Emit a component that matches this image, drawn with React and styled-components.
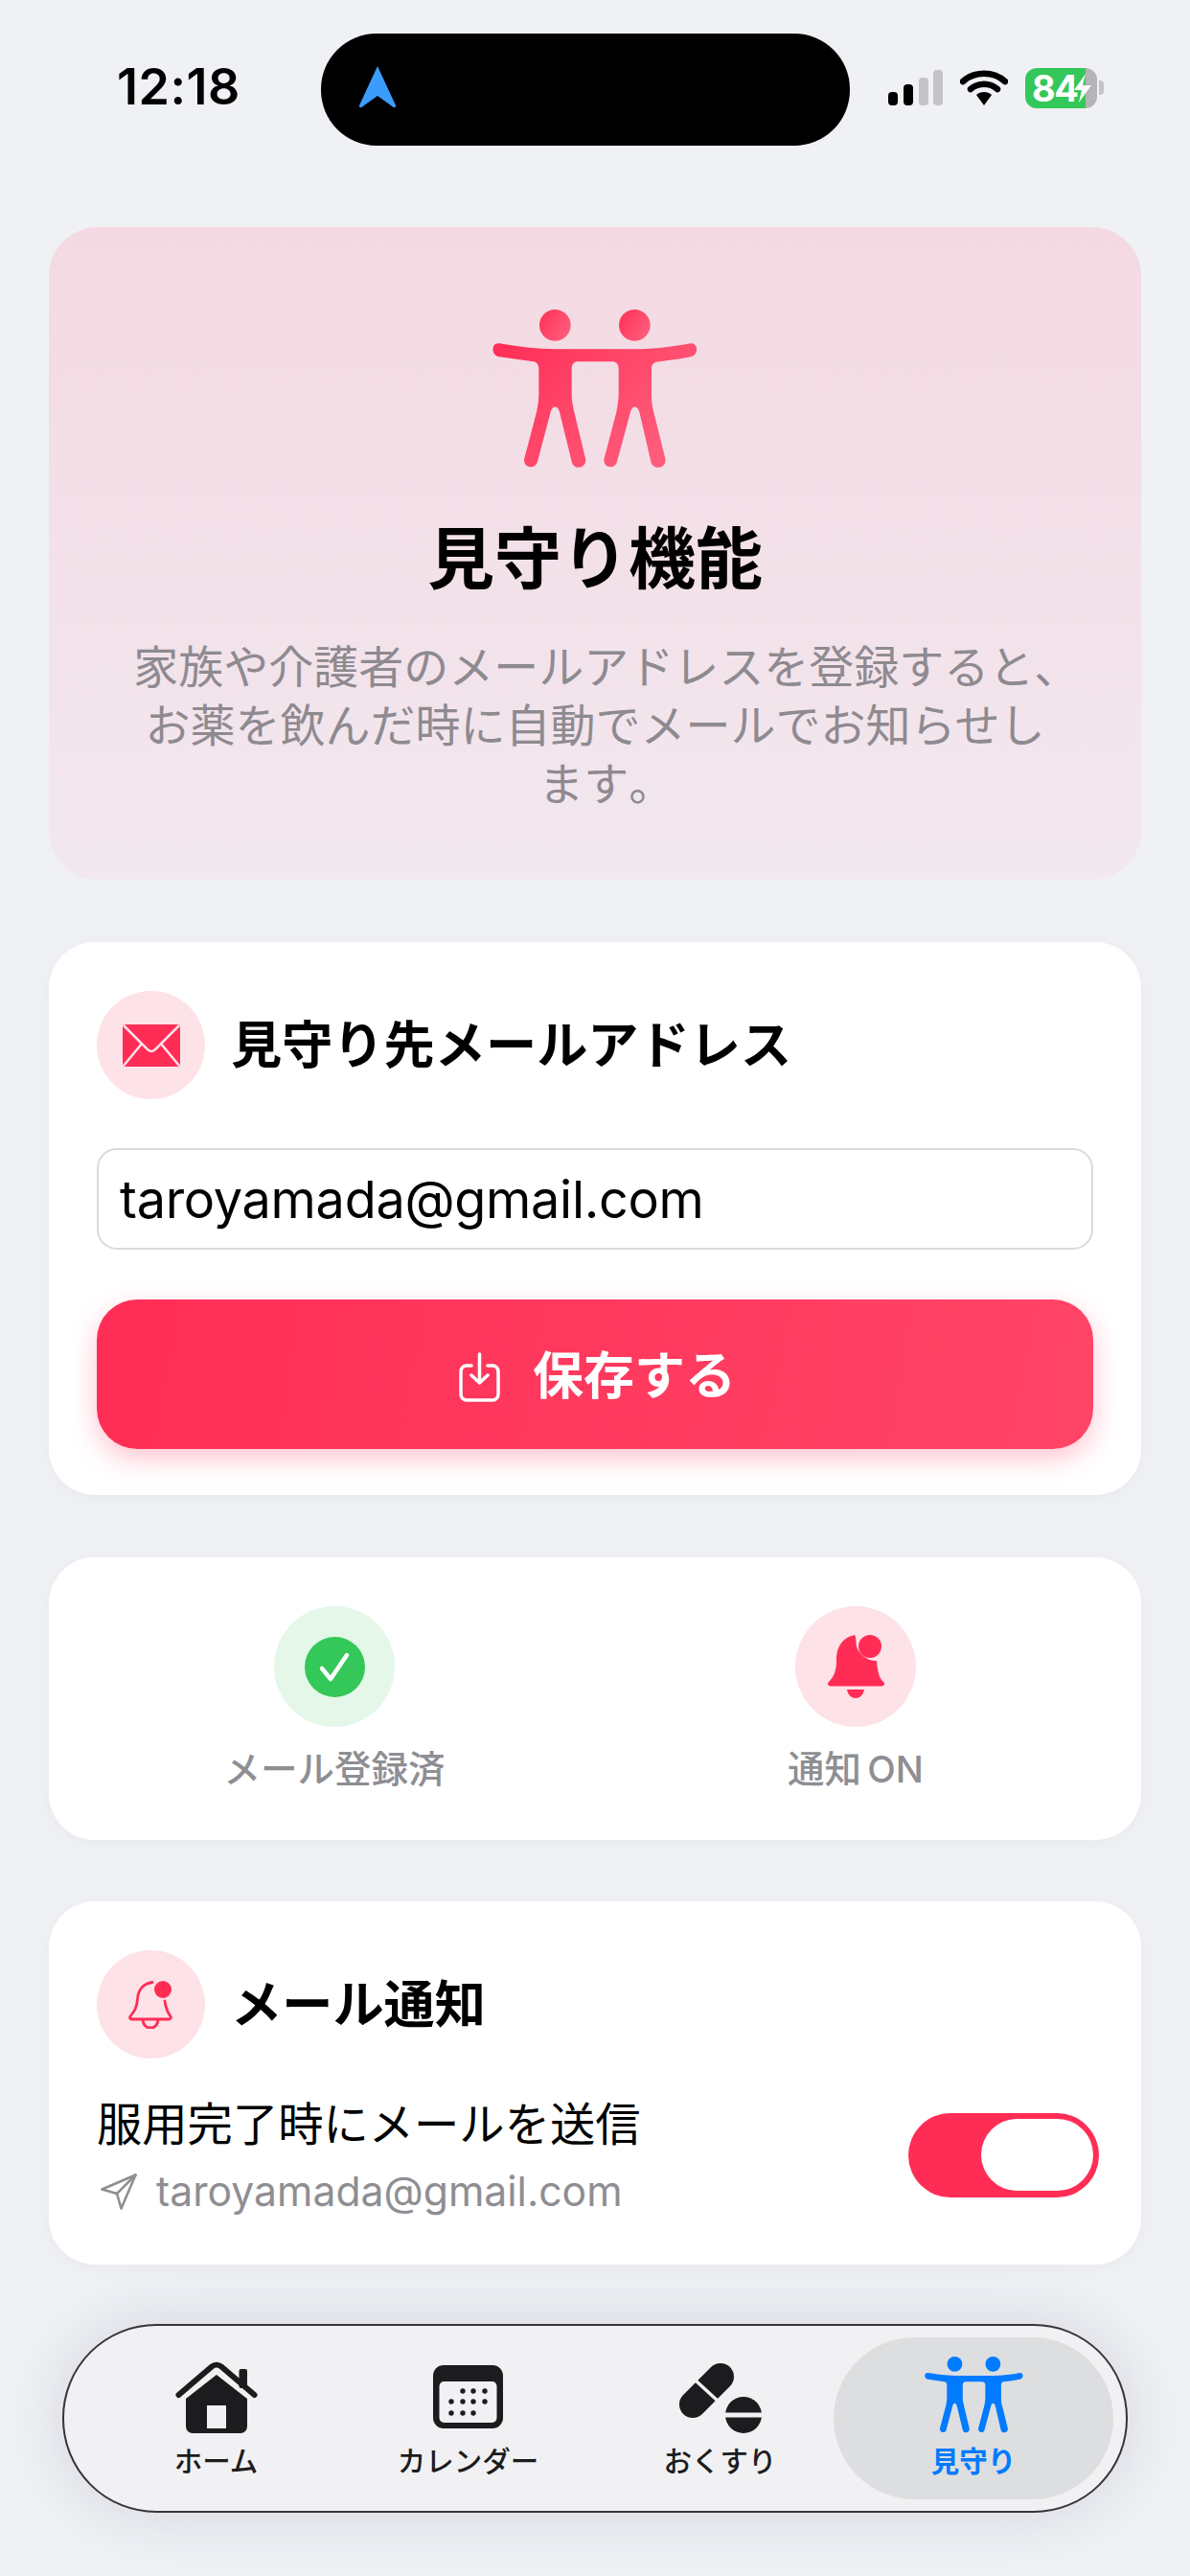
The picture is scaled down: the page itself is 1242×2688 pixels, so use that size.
import React from "react";
import styled, { createGlobalStyle } from "styled-components";

const Global = createGlobalStyle`
  html, body { margin: 0; padding: 0; background: #f0f1f5; }
  body { font-family: Inter, "Noto Sans CJK JP", sans-serif; }
  * { box-sizing: border-box; }
`;

const Page = styled.div`
  width: 1242px;
  height: 2688px;
  overflow: hidden;
  display: flex;
  flex-direction: column;
  background: #f0f1f5;
  padding: 0 51px;
`;

const StatusBar = styled.div`
  height: 237px;
  margin: 0 -51px;
  padding: 35px 90px 0 122px;
  display: flex;
  align-items: flex-start;
`;
const Time = styled.div`
  width: 213px;
  height: 117px;
  line-height: 112px;
  font-size: 52px;
  font-weight: 600;
  color: #000;
  letter-spacing: 0.5px;
`;
const Island = styled.div`
  width: 552px;
  height: 117px;
  border-radius: 58px;
  background: #000;
  display: flex;
  align-items: center;
  padding: 0 0 5px 39px;
`;
const StatusIcons = styled.div`
  margin-left: 40px;
  height: 117px;
  padding-bottom: 4px;
  display: flex;
  align-items: center;
  gap: 18px;
`;
const Battery = styled.div`
  position: relative;
  width: 75px;
  height: 42px;
  border-radius: 12px;
  background: linear-gradient(90deg, #34c759 84%, #b4b4b8 84%);
  color: #fff;
  font-size: 38px;
  font-weight: 700;
  line-height: 42px;
  padding-left: 7px;
  letter-spacing: -1.5px;
  &::after {
    content: "";
    position: absolute;
    right: -7px;
    top: 13px;
    width: 5px;
    height: 15px;
    border-radius: 0 4px 4px 0;
    background: #c4c4c8;
  }
`;
const Bolt = styled.svg`
  position: absolute;
  left: 50px;
  top: 6px;
`;

const Hero = styled.section`
  height: 681px;
  border-radius: 51px;
  background: linear-gradient(180deg, #f4d9e2 0%, #f2e8ef 100%);
  display: flex;
  flex-direction: column;
  align-items: center;
  padding-top: 86px;
`;
const HeroTitle = styled.h1`
  margin: 53px 0 0;
  font-size: 70px;
  line-height: 84px;
  font-weight: 700;
  color: #000;
`;
const HeroText = styled.p`
  margin: 39px 0 0;
  font-size: 47px;
  line-height: 61px;
  font-weight: 400;
  color: #8e8a90;
  text-align: center;
  white-space: nowrap;
`;
const HalfPunct = styled.span`
  font-feature-settings: "halt";
`;

const Card = styled.section`
  margin-top: ${(p) => p.$gap || 65}px;
  background: #fff;
  border-radius: 48px;
  box-shadow: 0 4px 20px rgba(0, 0, 0, 0.035);
  padding: 51px 50px ${(p) => p.$pb || 48}px;
`;
const CardHeader = styled.div`
  display: flex;
  align-items: center;
  gap: 27px;
`;
const CircleIcon = styled.div`
  width: ${(p) => p.$size || 113}px;
  height: ${(p) => p.$size || 113}px;
  border-radius: 50%;
  background: ${(p) => p.$bg || "#fde2e8"};
  display: flex;
  align-items: center;
  justify-content: center;
  flex: none;
`;
const CardTitle = styled.h2`
  margin: 0;
  font-size: 53.2px;
  line-height: 64px;
  font-weight: 700;
  color: #000;
`;
const EmailField = styled.div`
  margin-top: 51px;
  height: 106px;
  border: 2px solid #d8dadd;
  border-radius: 21px;
  padding: 0 22px;
  display: flex;
  align-items: center;
  font-size: 54px;
  color: #000;
  letter-spacing: -0.3px;
`;
const SaveButton = styled.button`
  margin-top: 52px;
  width: 100%;
  height: 156px;
  border: 0;
  border-radius: 42px;
  background: linear-gradient(100deg, #ff2d55 0%, #ff4567 100%);
  box-shadow: 0 10px 28px rgba(255, 45, 85, 0.28);
  display: flex;
  align-items: center;
  justify-content: center;
  gap: 34px;
  padding: 0 0 0 5px;
  font-family: inherit;
  font-size: 53px;
  font-weight: 600;
  color: #fff;
`;
const SaveLabel = styled.span`
  margin-bottom: 5px;
`;
const SaveGlyph = styled.svg`
  margin-top: 6px;
`;

const StatusGrid = styled.div`
  display: grid;
  grid-template-columns: 1fr 1fr;
  margin: 0 -24px;
`;
const StatusItem = styled.div`
  display: flex;
  flex-direction: column;
  align-items: center;
  gap: 20px;
`;
const StatusLabel = styled.div`
  font-size: 38.5px;
  line-height: 48px;
  font-weight: 500;
  color: #8e8e93;
  word-spacing: -4px;
`;

const ToggleRow = styled.div`
  margin: 39px -6px 0 0;
  display: flex;
  align-items: center;
  justify-content: space-between;
`;
const ToggleText = styled.div`
  display: flex;
  flex-direction: column;
  gap: 12px;
`;
const ToggleLabel = styled.div`
  font-size: 47.3px;
  line-height: 60px;
  color: #000;
`;
const ToggleSub = styled.div`
  display: flex;
  align-items: center;
  gap: 20px;
  padding-left: 4px;
  font-size: 42.7px;
  line-height: 56px;
  color: #8e8e93;
`;
const Toggle = styled.div`
  width: 199px;
  height: 88px;
  margin-bottom: 5px;
  border-radius: 44px;
  background: #ff2d55;
  display: flex;
  align-items: center;
  justify-content: flex-end;
  padding-right: 6px;
`;
const Thumb = styled.div`
  width: 117px;
  height: 75px;
  border-radius: 38px;
  background: #fff;
`;

const Nav = styled.nav`
  margin: 62px 14px 0;
  height: 197px;
  border-radius: 98px;
  border: 2px solid #36363a;
  background: #f1f1f3;
  box-shadow: 0 0 70px rgba(40, 40, 70, 0.13);
  display: flex;
  align-items: center;
  padding-left: 27px;
`;
const Tab = styled.div`
  flex: none;
  width: ${(p) => (p.$active ? 292 : 263)}px;
  height: 169px;
  margin-left: ${(p) => (p.$active ? -13 : 0)}px;
  border-radius: 85px;
  background: ${(p) => (p.$active ? "#dcdedf" : "transparent")};
  color: ${(p) => (p.$active ? "#007aff" : "#1c1c1e")};
  display: flex;
  flex-direction: column;
  align-items: center;
`;
const TabIcon = styled.div`
  height: 100px;
  display: flex;
  align-items: flex-end;
  padding-bottom: ${(p) => p.$pb || 0}px;
`;
const TabLabel = styled.div`
  margin-top: 11px;
  font-size: 29.5px;
  line-height: 36px;
  font-weight: ${(p) => (p.$active ? 700 : 500)};
`;

const FAMILY_PATH =
  "M243 205C300 215 360 222 418 223L667 223C730 223 790 215 843 205C865 203 870 240 843 247C810 255 770 258 735 263C725 266 720 272 720 285L720 370C721 395 722 400 728 425L763 565C770 595 725 605 718 575L682 420C675 398 660 398 654 420L612 575C604 603 565 593 572 565L610 420C615 395 617 380 617 360L617 285C617 270 610 262 595 262L490 262C478 262 470 270 470 285L470 360C470 385 473 395 478 420L513 565C520 595 477 605 470 575L432 420C426 398 410 398 404 420L363 575C355 603 315 593 322 565L360 420C365 395 367 380 367 360L367 285C367 270 360 264 350 262L243 247C217 242 217 203 243 205Z";

const Family = ({ width, fill, gradient }) => (
  <svg width={width} height={width * (0.776)} viewBox="222 99 642 498">
    {gradient && (
      <defs>
        <linearGradient id="heroGrad" x1="0" y1="0" x2="1" y2="0.6">
          <stop offset="0" stopColor="#ff2d55" />
          <stop offset="1" stopColor="#ff5d7c" />
        </linearGradient>
      </defs>
    )}
    <g fill={gradient ? "url(#heroGrad)" : fill}>
      <circle cx="418" cy="148" r="49" />
      <circle cx="667" cy="148" r="49" />
      <path d={FAMILY_PATH} />
    </g>
  </svg>
);

const LocationArrow = () => (
  <svg width="40" height="44" viewBox="0 0 40 44">
    <path d="M20 0L39 41C39.5 43 37.5 44 36 42.500L20 31L4 42.500C2.500 44 .5 43 1 41Z" fill="#3a9dfd" />
  </svg>
);
const Signal = () => (
  <svg width="57" height="37" viewBox="0 0 57 37">
    <rect x="0" y="23" width="10" height="14" rx="4" fill="#000" />
    <rect x="16" y="15" width="10" height="22" rx="4" fill="#000" />
    <rect x="32" y="8" width="10" height="29" rx="4" fill="#c4c4c8" />
    <rect x="47" y="0" width="10" height="37" rx="4" fill="#c4c4c8" />
  </svg>
);
const Wifi = () => (
  <svg width="50" height="37" viewBox="0 0 50 37">
    <path d="M3 12C15 1 35 1 47 12" fill="none" stroke="#000" strokeWidth="6.500" strokeLinecap="round" />
    <path d="M11 20C19 13 31 13 39 20" fill="none" stroke="#000" strokeWidth="6.500" strokeLinecap="round" />
    <path d="M17 26C21 22 29 22 33 26L25 37Z" fill="#000" />
  </svg>
);
const Mail = () => (
  <svg width="60" height="44" viewBox="0 0 60 44">
    <rect x="0" y="0" width="60" height="44" rx="3" fill="#ff2d55" />
    <path d="M1 1L26 26C28 28.500 32 28.500 34 26L59 1M1 43L20 20M59 43L40 20" fill="none" stroke="#fde2e8" strokeWidth="2.500" />
  </svg>
);
const SaveIcon = () => (
  <SaveGlyph width="43" height="52" viewBox="0 0 43 52" fill="none" stroke="#fff" strokeWidth="3.500" strokeLinecap="round" strokeLinejoin="round">
    <path d="M13 14H8a6 6 0 0 0-6 6V44a6 6 0 0 0 6 6H35a6 6 0 0 0 6-6V20a6 6 0 0 0-6-6H30" />
    <path d="M21.500 2V32M13 24L21.500 32L30 24" />
  </SaveGlyph>
);
const Check = () => (
  <svg width="63" height="63" viewBox="0 0 63 63">
    <circle cx="31.500" cy="31.500" r="31.500" fill="#34c759" />
    <path d="M18 33L27 44L44 19" fill="none" stroke="#fff" strokeWidth="4.500" strokeLinecap="round" strokeLinejoin="round" />
  </svg>
);
const BellSolid = () => (
  <svg width="59" height="66" viewBox="0 0 59 66">
    <path d="M28 0C14 3 9 14 9 26C9 38 6 44 1 49C-1 51 0 53.500 3 53.500H56C59 53.500 60 51 58 49C54 45 52 40 51 27C44 28 33 22 30 12C29 7 30 3 28 0Z" fill="#ff2d55" />
    <circle cx="44" cy="12" r="12" fill="#ff2d55" />
    <path d="M20 57H38C37 63 33 66 29 66C25 66 21 63 20 57Z" fill="#ff2d55" />
  </svg>
);
const BellOutline = () => (
  <svg width="48" height="50" viewBox="0 0 48 50" fill="none">
    <path d="M25 1.500C15 3 10 10 9.500 19C9 28 6 32 2 37C1 38.500 2 40 3.500 40H42C44 40 45 38.500 44 37C40 32 39 28 38 21" stroke="#ff2d55" strokeWidth="2.800" strokeLinecap="round" />
    <path d="M15 40C15 46 19 49 23 49C27 49 31 46 31 40" stroke="#ff2d55" strokeWidth="2.800" />
    <circle cx="36" cy="9" r="9" fill="#ff2d55" />
  </svg>
);
const SendIcon = () => (
  <svg width="38" height="38" viewBox="0 0 38 38" fill="none" stroke="#8e8e93" strokeWidth="2.600" strokeLinejoin="round" strokeLinecap="round">
    <path d="M1.500 16.500L36.500 1.500L21.500 36.500L17 21Z" />
    <path d="M17 21L36.500 1.500" />
  </svg>
);
const HomeIcon = () => (
  <svg width="86" height="75" viewBox="0 0 86 75">
    <rect x="66.500" y="8" width="8.500" height="20" rx="2" fill="#1c1c1e" />
    <path d="M3.500 35L38 5.500C41 3 45 3 48 5.500L82.500 35" fill="none" stroke="#1c1c1e" strokeWidth="6" strokeLinecap="round" />
    <path d="M11 39L43 14L75 39V68a7 7 0 0 1-7 7H18a7 7 0 0 1-7-7Z" fill="#1c1c1e" />
    <rect x="33" y="46" width="20" height="24" fill="#f1f1f3" />
  </svg>
);
const CalendarIcon = () => {
  const dots = [
    [31, 27], [42, 27], [54, 27],
    [19, 38], [31, 38], [42, 38], [54, 38],
    [19, 50], [31, 50], [42, 50],
  ];
  return (
    <svg width="73" height="66" viewBox="0 0 73 66">
      <rect width="73" height="66" rx="11" fill="#1c1c1e" />
      <rect x="6.500" y="17" width="60" height="43" rx="5" fill="#f1f1f3" />
      {dots.map(([x, y]) => (
        <circle key={`${x}-${y}`} cx={x} cy={y} r="2.700" fill="#1c1c1e" />
      ))}
    </svg>
  );
};
const PillIcon = () => (
  <svg width="87" height="74" viewBox="0 0 87 74">
    <path d="M15 44L44 15" stroke="#1c1c1e" strokeWidth="28" strokeLinecap="round" />
    <path d="M18 19L43 42" stroke="#f1f1f3" strokeWidth="3.500" />
    <circle cx="68" cy="55" r="19" fill="#1c1c1e" />
    <path d="M47 55H87" stroke="#f1f1f3" strokeWidth="5" />
  </svg>
);

export default function App() {
  return (
    <Page>
      <Global />
      <StatusBar>
        <Time>12:18</Time>
        <Island>
          <LocationArrow />
        </Island>
        <StatusIcons>
          <Signal />
          <Wifi />
          <Battery>
            84
            <Bolt width="20" height="30" viewBox="0 0 20 30">
              <path d="M13 0L1 17H9L6 30L19 12H10Z" fill="#fff" />
            </Bolt>
          </Battery>
        </StatusIcons>
      </StatusBar>

      <Hero>
        <Family width={214} gradient />
        <HeroTitle>見守り機能</HeroTitle>
        <HeroText>
          家族や介護者のメールアドレスを登録すると<HalfPunct>、</HalfPunct>
          <br />
          お薬を飲んだ時に自動でメールでお知らせし
          <br />
          ます<HalfPunct>。</HalfPunct>
        </HeroText>
      </Hero>

      <Card>
        <CardHeader>
          <CircleIcon>
            <Mail />
          </CircleIcon>
          <CardTitle>見守り先メールアドレス</CardTitle>
        </CardHeader>
        <EmailField>taroyamada@gmail.com</EmailField>
        <SaveButton>
          <SaveIcon />
          <SaveLabel>保存する</SaveLabel>
        </SaveButton>
      </Card>

      <Card $pb={50}>
        <StatusGrid>
          <StatusItem>
            <CircleIcon $size={126} $bg="#e4f7e9">
              <Check />
            </CircleIcon>
            <StatusLabel>メール登録済</StatusLabel>
          </StatusItem>
          <StatusItem>
            <CircleIcon $size={126}>
              <BellSolid />
            </CircleIcon>
            <StatusLabel>通知 ON</StatusLabel>
          </StatusItem>
        </StatusGrid>
      </Card>

      <Card $gap={64}>
        <CardHeader>
          <CircleIcon>
            <BellOutline />
          </CircleIcon>
          <CardTitle>メール通知</CardTitle>
        </CardHeader>
        <ToggleRow>
          <ToggleText>
            <ToggleLabel>服用完了時にメールを送信</ToggleLabel>
            <ToggleSub>
              <SendIcon />
              taroyamada@gmail.com
            </ToggleSub>
          </ToggleText>
          <Toggle>
            <Thumb />
          </Toggle>
        </ToggleRow>
      </Card>

      <Nav>
        <Tab>
          <TabIcon>
            <HomeIcon />
          </TabIcon>
          <TabLabel>ホーム</TabLabel>
        </Tab>
        <Tab>
          <TabIcon $pb={5}>
            <CalendarIcon />
          </TabIcon>
          <TabLabel>カレンダー</TabLabel>
        </Tab>
        <Tab>
          <TabIcon>
            <PillIcon />
          </TabIcon>
          <TabLabel>おくすり</TabLabel>
        </Tab>
        <Tab $active>
          <TabIcon>
            <Family width={103} fill="#007aff" />
          </TabIcon>
          <TabLabel $active>見守り</TabLabel>
        </Tab>
      </Nav>
    </Page>
  );
}
